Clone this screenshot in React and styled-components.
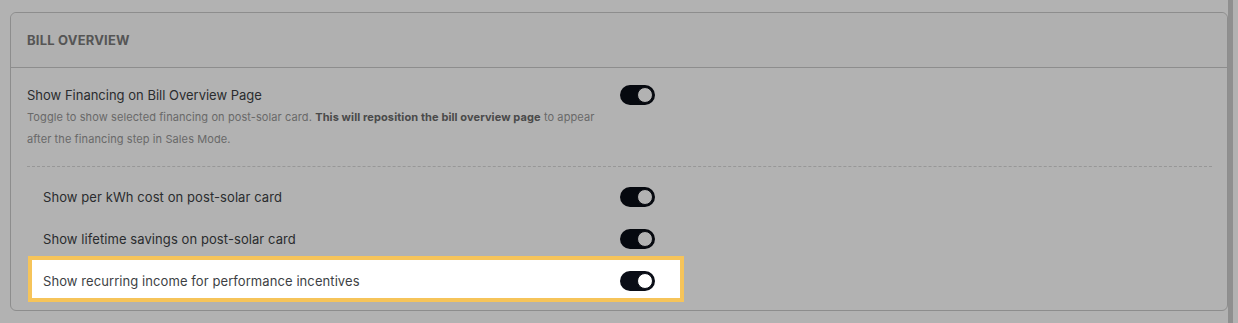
import styled, { createGlobalStyle } from 'styled-components';

const GlobalStyle = createGlobalStyle`
  html, body {
    margin: 0;
    padding: 0;
    background: #ffffff;
    font-family: Inter, "Noto Sans", sans-serif;
  }
`;

const Page = styled.div`
  display: flex;
  min-height: 323px;
  box-sizing: border-box;
  padding-right: 5px;
`;

const Content = styled.div`
  flex: 1;
  padding: 12px 0 10px 10px;
`;

const ScrollTrack = styled.div`
  width: 5px;
  background: #cdcdcd;
`;

const Card = styled.section`
  border: 1px solid #cbcbcb;
  border-radius: 6px;
  background: #ffffff;
`;

const CardHeader = styled.header`
  height: 54px;
  display: flex;
  align-items: center;
  padding: 0 16px;
  border-bottom: 1px solid #cbcbcb;
  background: #fcfcfc;
  border-radius: 6px 6px 0 0;

  h2 {
    margin: 0;
    font-size: 13px;
    font-weight: 700;
    letter-spacing: 0.2px;
    text-transform: uppercase;
    color: #7a7a7a;
  }
`;

const CardBody = styled.div`
  padding: 18px 15px 12px 16px;
`;

const MainRow = styled.div`
  display: flex;
  align-items: flex-start;
  width: 628px;
  justify-content: space-between;
`;

const Label = styled.div`
  font-size: 13px;
  line-height: 18px;
  letter-spacing: ${({ $wide }) => ($wide ? '0.08px' : '0')};
  color: #3d3f44;
`;

const Description = styled.p`
  margin: 2px 0 0;
  font-size: 11px;
  line-height: 22px;
  letter-spacing: 0.1px;
  color: #979797;
  max-width: 590px;

  strong {
    font-weight: 700;
    color: #6a6a6a;
  }
`;

const Divider = styled.hr`
  border: none;
  border-top: 1px dashed #d9d9d9;
  margin: 16px 0 9px;
`;

const SubList = styled.div`
  display: flex;
  flex-direction: column;
  gap: 4px;
  margin-left: 5px;
`;

const SubRow = styled.div`
  display: flex;
  align-items: center;
  justify-content: space-between;
  width: 648px;
  height: 38px;
  box-sizing: border-box;
  padding: 4px 25px 0 11px;
  position: relative;
  ${({ $highlight }) =>
    $highlight &&
    `
    z-index: 11;
    background: #ffffff;
    outline: 4px solid #f6c45a;
  `}
`;

const Overlay = styled.div`
  position: fixed;
  inset: 0;
  background: rgba(0, 0, 0, 0.3);
  z-index: 10;
  pointer-events: none;
`;

const SwitchTrack = styled.span`
  display: inline-flex;
  align-items: center;
  justify-content: ${({ $on }) => ($on ? 'flex-end' : 'flex-start')};
  width: 35px;
  height: 20px;
  box-sizing: border-box;
  padding: 2px;
  border-radius: 10px;
  background: ${({ $on }) => ($on ? '#0a0d16' : '#d4d4d4')};
  flex-shrink: 0;
  margin-top: ${({ $offset }) => $offset || 0}px;
`;

const SwitchKnob = styled.span`
  width: 16px;
  height: 16px;
  border-radius: 50%;
  background: #ffffff;
  box-sizing: border-box;
  border: 1px solid #0a0d16;
`;

const Toggle = ({ on = true, offset }) => (
  <SwitchTrack $on={on} $offset={offset}>
    <SwitchKnob />
  </SwitchTrack>
);

const subSettings = [
  { id: 'kwh', label: 'Show per kWh cost on post-solar card' },
  { id: 'lifetime', label: 'Show lifetime savings on post-solar card' },
  { id: 'recurring', label: 'Show recurring income for performance incentives', highlight: true },
];

export default function App() {
  return (
    <>
      <GlobalStyle />
      <Page>
        <Content>
          <Card>
            <CardHeader>
              <h2>Bill Overview</h2>
            </CardHeader>
            <CardBody>
              <MainRow>
                <div>
                  <Label>Show Financing on Bill Overview Page</Label>
                  <Description>
                    Toggle to show selected financing on post-solar card.{' '}
                    <strong>This will reposition the bill overview page</strong> to appear
                    after the financing step in Sales Mode.
                  </Description>
                </div>
                <Toggle offset={-1} />
              </MainRow>
              <Divider />
              <SubList>
                {subSettings.map((s) => (
                  <SubRow key={s.id} $highlight={s.highlight}>
                    <Label $wide>{s.label}</Label>
                    <Toggle />
                  </SubRow>
                ))}
              </SubList>
            </CardBody>
          </Card>
        </Content>
        <ScrollTrack />
      </Page>
      <Overlay />
    </>
  );
}
